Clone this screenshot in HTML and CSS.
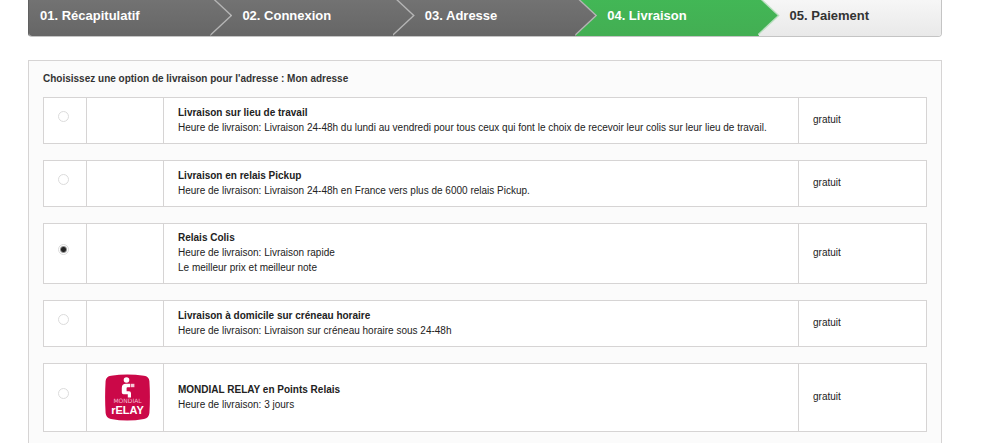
FILE: index.html
```html
<!DOCTYPE html>
<html lang="fr">
<head>
<meta charset="utf-8">
<title>Livraison</title>
<link rel="stylesheet" href="styles.css">
</head>
<body>
<main class="page">
  <ol class="steps">
    <li class="step step-done"><a href="#recapitulatif">01. Récapitulatif</a></li>
    <li class="step step-done"><a href="#connexion">02. Connexion</a></li>
    <li class="step step-done"><a href="#adresse">03. Adresse</a></li>
    <li class="step step-current" aria-current="step"><span>04. Livraison</span></li>
    <li class="step step-todo"><span>05. Paiement</span></li>
  </ol>

  <form class="panel">
    <h1 class="panel-title">Choisissez une option de livraison pour l'adresse : Mon adresse</h1>
    <div class="options">
      <div class="option">
        <div class="cell cell-radio"><input class="radio" type="radio" name="carrier" id="travail"></div>
        <div class="cell cell-logo"></div>
        <label class="cell cell-text" for="travail"><strong>Livraison sur lieu de travail</strong><span>Heure de livraison: Livraison 24-48h du lundi au vendredi pour tous ceux qui font le choix de recevoir leur colis sur leur lieu de travail.</span></label>
        <div class="cell cell-price">gratuit</div>
      </div>
      <div class="option">
        <div class="cell cell-radio"><input class="radio" type="radio" name="carrier" id="pickup"></div>
        <div class="cell cell-logo"></div>
        <label class="cell cell-text" for="pickup"><strong>Livraison en relais Pickup</strong><span>Heure de livraison: Livraison 24-48h en France vers plus de 6000 relais Pickup.</span></label>
        <div class="cell cell-price">gratuit</div>
      </div>
      <div class="option">
        <div class="cell cell-radio"><input class="radio" type="radio" name="carrier" id="colis" checked></div>
        <div class="cell cell-logo"></div>
        <label class="cell cell-text" for="colis"><strong>Relais Colis</strong><span>Heure de livraison: Livraison rapide</span><span>Le meilleur prix et meilleur note</span></label>
        <div class="cell cell-price">gratuit</div>
      </div>
      <div class="option">
        <div class="cell cell-radio"><input class="radio" type="radio" name="carrier" id="domicile"></div>
        <div class="cell cell-logo"></div>
        <label class="cell cell-text" for="domicile"><strong>Livraison à domicile sur créneau horaire</strong><span>Heure de livraison: Livraison sur créneau horaire sous 24-48h</span></label>
        <div class="cell cell-price">gratuit</div>
      </div>
      <div class="option">
        <div class="cell cell-radio"><input class="radio" type="radio" name="carrier" id="mondial"></div>
        <div class="cell cell-logo">
          <svg class="logo" viewBox="0 0 45 47" role="img" aria-label="Mondial Relay">
            <path fill="#cb0848" d="M6 1.8Q22 -.6 39 1.8Q44 2.5 44.4 7Q45.4 23 44.4 39Q44 43.8 39 45Q22 48.2 6 45Q1 43.8 .6 39Q-.4 23 .6 7Q1 2.5 6 1.8Z"/>
            <circle cx="21.5" cy="6" r="2.8" fill="#fff"/>
            <path fill="#fff" d="M21 9.8H25V13.2H22.4Q21.6 13.2 21.6 14.2V17.2H24Q26 17.2 26 19.2V23.4H22.8V20.2H18.5Q16.8 20.2 16.8 18.4V14Q16.8 9.8 21 9.8Z"/>
            <path fill="#f6c9d7" d="M25.6 9.800H29.400V13.200H25.600Z"/>
            <text x="22.5" y="29" class="logo-small">MONDIAL</text>
            <text x="22.5" y="40" class="logo-big">rELAY</text>
          </svg>
        </div>
        <label class="cell cell-text" for="mondial"><strong>MONDIAL RELAY en Points Relais</strong><span>Heure de livraison: 3 jours</span></label>
        <div class="cell cell-price">gratuit</div>
      </div>
    </div>
  </form>
</main>
</body>
</html>
```
FILE: styles.css
```css
* {
  box-sizing: border-box;
}

body {
  margin: 0;
  background: #fff;
  color: #222;
  font: 10px/15px "Liberation Sans", Arial, sans-serif;
}

.page {
  display: flow-root;
  padding: 0 58px 0 28px;
}

/* Progress steps */
.steps {
  display: grid;
  grid-template-columns: repeat(5, 1fr);
  margin: -6px 0 23px;
  padding: 0;
  list-style: none;
  border: 1px solid #c4c4c4;
  border-left-color: #606060;
  border-radius: 4px;
  overflow: hidden;
}

.step {
  position: relative;
  padding: 11px 0 11px 31px;
  font-size: 13px;
  line-height: 19px;
  font-weight: bold;
}

.step:first-child {
  padding-left: 11px;
}

.step a {
  color: inherit;
  text-decoration: none;
}

.step-done {
  background: linear-gradient(#747474, #666);
  color: #fff;
}

.step-current {
  background: linear-gradient(#42b856, #43ae53);
  color: #fff;
}

.step-todo {
  background: linear-gradient(#f8f8f8, #e9e9e9);
  color: #333;
}

.step:not(:last-child)::before,
.step:not(:last-child)::after {
  content: "";
  position: absolute;
  z-index: 1;
  top: 0;
  bottom: 0;
  left: calc(100% - 1px);
  width: 22px;
  background: #b5b5b5;
  clip-path: polygon(0 0, 100% 50%, 0 100%);
}

.step:not(:last-child)::after {
  left: calc(100% - 3px);
  background: inherit;
}

.step-current:not(:last-child)::before {
  background: #b9dfbf;
}

/* Delivery options */
.panel {
  padding: 10px 14px 16px;
  border: 1px solid #d6d4d4;
  background: #fbfbfb;
}

.panel-title {
  margin: 0 0 11px;
  color: #333;
  font-size: 10px;
  line-height: 15px;
}

.options {
  display: grid;
  gap: 16px;
}

.option {
  display: grid;
  grid-template-columns: 42px 77px 1fr 128px;
  min-height: 47px;
  border: 1px solid #d6d4d4;
  background: #fff;
}

.cell {
  display: flex;
  align-items: center;
}

.cell + .cell {
  border-left: 1px solid #d6d4d4;
}

.cell-radio {
  justify-content: center;
  padding: 0 3px 8px 0;
}

.cell-logo {
  justify-content: center;
  padding-left: 5px;
}

.cell-text {
  flex-direction: column;
  align-items: flex-start;
  justify-content: center;
  padding: 6px 14px 8px;
}

.cell-price {
  padding: 0 14px 2px;
}

.radio {
  appearance: none;
  width: 11px;
  height: 11px;
  margin: 0;
  border: 1px solid #dcdcdc;
  border-radius: 50%;
  background: #fff;
}

.radio:checked {
  background: radial-gradient(circle, #222 2px, #fff 4px);
}

.logo {
  width: 45px;
  height: 47px;
  margin: 10px 0;
}

.logo-small,
.logo-big {
  fill: #fff;
  text-anchor: middle;
}

.logo-small {
  fill: #f3b9cb;
  font: 6px "DejaVu Sans", sans-serif;
}

.logo-big {
  font: bold 11px "Liberation Sans", sans-serif;
}
```
